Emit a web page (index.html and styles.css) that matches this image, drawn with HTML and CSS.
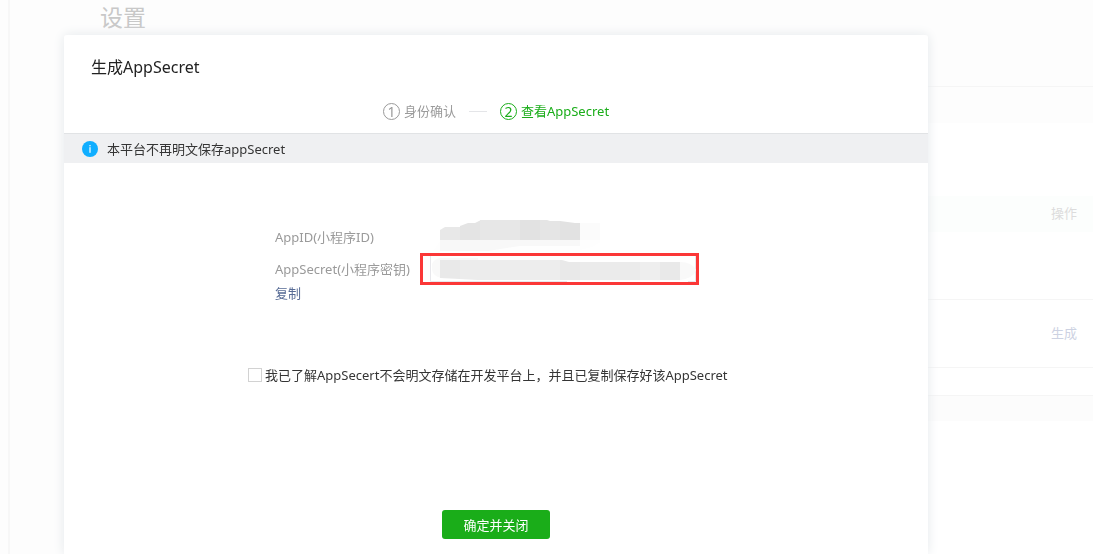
FILE: index.html
```html
<!DOCTYPE html>
<html lang="zh-CN">
<head>
    <meta charset="UTF-8">
    <meta name="viewport" content="width=device-width, initial-scale=1.0">
    <title>生成AppSecret</title>
    <link rel="stylesheet" href="styles.css">
</head>
<body>
    <div class="page">
        <div class="sidebar"></div>
        <div class="main">
            <h1 class="page-title">设置</h1>
            <div class="tabs"></div>
            <div class="panel">
                <div class="panel-head">操作</div>
                <div class="panel-row"></div>
                <div class="panel-row"><a href="#" class="panel-link">生成</a></div>
                <div class="panel-end"></div>
                <div class="panel-gap"></div>
            </div>
        </div>
    </div>

    <div class="overlay">
        <div class="dialog" role="dialog" aria-labelledby="dialogTitle">
            <h2 class="dialog-title" id="dialogTitle">生成AppSecret</h2>

            <div class="steps">
                <div class="step"><span class="step-num">1</span>身份确认</div>
                <div class="step-line"></div>
                <div class="step active"><span class="step-num">2</span>查看AppSecret</div>
            </div>

            <div class="notice">
                <svg class="notice-icon" width="16" height="16" viewBox="0 0 16 16">
                    <circle cx="8" cy="8" r="8" fill="#10aeff"/>
                    <rect x="7.4" y="4" width="1.2" height="1.3" fill="#fff"/>
                    <rect x="7.4" y="6.2" width="1.2" height="5.6" fill="#fff"/>
                </svg>
                本平台不再明文保存appSecret
            </div>

            <div class="info">
                <div class="info-row">
                    <div class="info-label">AppID(小程序ID)</div>
                    <svg class="mask" width="180" height="33" viewBox="0 0 180 33">
                        <path d="M14 30h146l12-3 10-6V3h-30v18H20z" fill="#fefefe"/>
                        <path d="M160 3h20v17h-20z" fill="#fbfbfb"/>
                        <path d="M20 20h140v6h-60l-20 3-12 2H20z" fill="#f8f8f8"/>
                        <path d="M20 20V10l5-3h15v13z" fill="#e8e8e8"/>
                        <path d="M40 20V6l8-3h7l6-3v20z" fill="#e4e4e4"/>
                        <path d="M60 0h40v20H60z" fill="#e7e7e7"/>
                        <path d="M100 0h20v20h-20z" fill="#e2e2e2"/>
                        <path d="M120 0h7l3 1h10v19h-20z" fill="#e5e5e5"/>
                        <path d="M140 1l15 2h5v17h-20z" fill="#e2e2e2"/>
                    </svg>
                </div>
                <div class="info-row">
                    <div class="info-label">AppSecret(小程序密钥)</div>
                    <div class="secret">
                        <svg class="mask" width="273" height="26" viewBox="0 0 273 26">
                            <path d="M7.500 0V25.500H144M265 25.500H272.500V0" fill="none" stroke="#e7e7eb"/>
                            <path d="M9 8q2-5 8-6h38v2H18v18q-8-2-9-8zM257 6q12 0 16 8-2 8-16 10z" fill="#f9f9f9"/>
                            <path d="M17 4h20v19l-20-1z" fill="#e9e9e9"/>
                            <path d="M37 4h40v20H55l-18-1z" fill="#ececec"/>
                            <path d="M77 4h60v20H77z" fill="#ededed"/>
                            <path d="M137 4h2l7 2h11v18h-20z" fill="#e9e9e9"/>
                            <path d="M157 6h60v18h-60z" fill="#ebebeb"/>
                            <path d="M217 6h20v18h-20z" fill="#eeeeee"/>
                            <path d="M237 6h20v18h-20z" fill="#e9e9e9"/>
                        </svg>
                    </div>
                </div>
                <a href="#" class="copy">复制</a>
            </div>

            <div class="confirm">
                <input type="checkbox" id="agree">
                <label for="agree">我已了解AppSecert不会明文存储在开发平台上，并且已复制保存好该AppSecret</label>
            </div>

            <div class="actions">
                <button type="button" class="btn">确定并关闭</button>
            </div>
        </div>
    </div>
</body>
</html>
```

FILE: styles.css
```css
* {
    margin: 0;
    padding: 0;
    box-sizing: border-box;
}

body {
    font-family: "Noto Sans", "Noto Sans CJK SC", sans-serif;
    font-size: 13px;
    line-height: 20px;
    color: #353535;
    background: #fdfdfd;
    overflow: hidden;
}

a {
    text-decoration: none;
}

/* page behind the dialog */
.page {
    display: flex;
    min-height: 100vh;
}

.sidebar {
    width: 10px;
    border-right: 2px solid #f7f7f7;
}

.main {
    flex: 1;
    display: flex;
    flex-direction: column;
    padding-left: 90px;
}

.page-title {
    height: 86px;
    font-size: 23px;
    font-weight: 400;
    line-height: 34px;
    color: #c8c8c8;
}

.tabs {
    height: 37px;
    border-top: 1px solid #f5f5f5;
}

.panel {
    flex: 1;
    padding-top: 73px;
    background: #fff;
    text-align: right;
}

.panel-head {
    height: 36px;
    padding-right: 16px;
    line-height: 34px;
    color: #dcdcdc;
    background: #fcfefd;
}

.panel-row {
    height: 68px;
    padding-right: 16px;
    line-height: 66px;
    border-bottom: 1px solid #f5f5f5;
}

.panel-link {
    color: #cdd2e2;
}

.panel-end {
    height: 27px;
}

.panel-gap {
    height: 26px;
    border-top: 1px solid #f5f5f5;
    background: #fcfcfc;
}

/* dialog */
.overlay {
    position: fixed;
    inset: 0;
    display: flex;
    padding: 35px 165px 0 64px;
}

.dialog {
    flex: 1;
    background: #fff;
    border-radius: 3px 3px 0 0;
    box-shadow: 0 0 12px #e4e8eb;
}

.dialog-title {
    padding: 20px 27px 22px;
    font-size: 16px;
    font-weight: 400;
    line-height: 24px;
    color: #222;
}

.steps {
    display: flex;
    justify-content: center;
    align-items: center;
    padding-bottom: 12px;
}

.step {
    display: flex;
    align-items: center;
    gap: 4px;
    color: #9a9a9a;
}

.step.active {
    color: #1aad19;
}

.step-num {
    width: 17px;
    height: 17px;
    border: 1px solid;
    border-radius: 50%;
    font-size: 14px;
    line-height: 15px;
    text-align: center;
}

.step-line {
    width: 18px;
    margin: 0 13px;
    border-top: 1px solid #e4e5e8;
}

.notice {
    display: flex;
    align-items: center;
    gap: 9px;
    height: 30px;
    padding-left: 18px;
    border-top: 1px solid #e1e3e5;
    background: #eff0f2;
}

.info {
    padding: 57px 0 64px 211px;
}

.info-row {
    display: flex;
    align-items: center;
}

.info-label {
    width: 145px;
    color: #9a9a9a;
}

.mask {
    display: block;
}

.secret {
    border: 3px solid #fb3737;
}

.copy {
    display: block;
    line-height: 16px;
    color: #576b95;
}

.confirm {
    display: flex;
    align-items: center;
    gap: 3px;
    padding-left: 184px;
}

.confirm input {
    appearance: none;
    width: 14px;
    height: 14px;
    border: 1px solid #d2d2d2;
    background: #fff;
}

.confirm input:checked {
    background: #1aad19;
}

.actions {
    padding: 125px 0 30px;
    text-align: center;
}

.btn {
    height: 29px;
    padding: 0 21px;
    border: none;
    border-radius: 3px;
    background: #1aad19;
    color: #fff;
    font-family: inherit;
    font-size: 13px;
    cursor: pointer;
}
```
